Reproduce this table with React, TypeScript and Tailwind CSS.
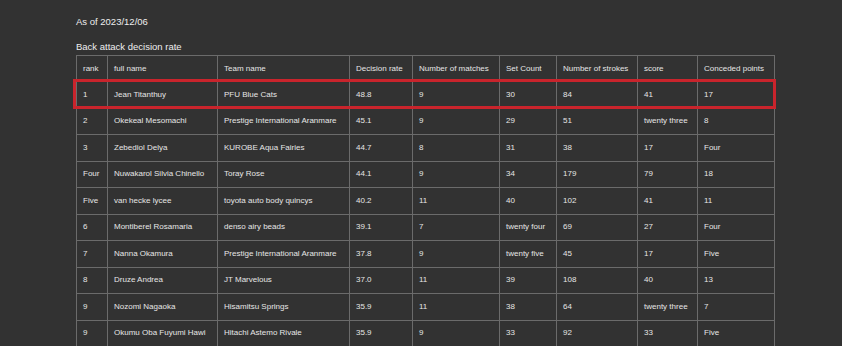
const headers = [
  'rank',
  'full name',
  'Team name',
  'Decision rate',
  'Number of matches',
  'Set Count',
  'Number of strokes',
  'score',
  'Conceded points',
];

const widths = ['w-[31px]', 'w-[110px]', 'w-[132px]', 'w-[63px]', 'w-[87px]', 'w-[57px]', 'w-[81px]', 'w-[60px]', 'w-[77px]'];

const rows = [
  ['1', 'Jean Titanthuy', 'PFU Blue Cats', '48.8', '9', '30', '84', '41', '17'],
  ['2', 'Okekeal Mesomachi', 'Prestige International Aranmare', '45.1', '9', '29', '51', 'twenty three', '8'],
  ['3', 'Zebediol Delya', 'KUROBE Aqua Fairies', '44.7', '8', '31', '38', '17', 'Four'],
  ['Four', 'Nuwakarol Silvia Chinello', 'Toray Rose', '44.1', '9', '34', '179', '79', '18'],
  ['Five', 'van hecke lycee', 'toyota auto body quincys', '40.2', '11', '40', '102', '41', '11'],
  ['6', 'Montiberel Rosamaria', 'denso airy beads', '39.1', '7', 'twenty four', '69', '27', 'Four'],
  ['7', 'Nanna Okamura', 'Prestige International Aranmare', '37.8', '9', 'twenty five', '45', '17', 'Five'],
  ['8', 'Druze Andrea', 'JT Marvelous', '37.0', '11', '39', '108', '40', '13'],
  ['9', 'Nozomi Nagaoka', 'Hisamitsu Springs', '35.9', '11', '38', '64', 'twenty three', '7'],
  ['9', 'Okumu Oba Fuyumi Hawi', 'Hitachi Astemo Rivale', '35.9', '9', '33', '92', '33', 'Five'],
];

export default function App() {
  return (
    <div className="w-[842px] h-[346px] overflow-hidden bg-[#323232] text-[#eeeeee] pl-[76px] pt-[16px] font-['Liberation_Sans',Arial,sans-serif]">
      <div className="text-[9.5px] leading-[12px]">As of 2023/12/06</div>
      <div className="mt-[13px] mb-[2px] text-[9.5px] leading-[12px]">Back attack decision rate</div>

      <div className="relative w-[699px]">
        <table className="table-fixed border-collapse text-[8px] text-[#e6e6e6]">
          <thead>
            <tr className="h-[26px]">
              {headers.map((h, i) => (
                <th key={h} className={`${widths[i]} border border-[#6b6b6b] px-[6px] text-left font-normal whitespace-nowrap`}>
                  {h}
                </th>
              ))}
            </tr>
          </thead>
          <tbody>
            {rows.map((r, ri) => (
              <tr key={ri} className="h-[26.5px]">
                {r.map((c, ci) => (
                  <td key={ci} className="border border-[#6b6b6b] px-[6px] whitespace-nowrap">
                    {c}
                  </td>
                ))}
              </tr>
            ))}
          </tbody>
        </table>

        {/* highlight box round the first row */}
        <div className="absolute left-[-3px] top-[24px] w-[703px] h-[30px] border-[3px] border-[#c9242c] pointer-events-none" />
      </div>
    </div>
  );
}
